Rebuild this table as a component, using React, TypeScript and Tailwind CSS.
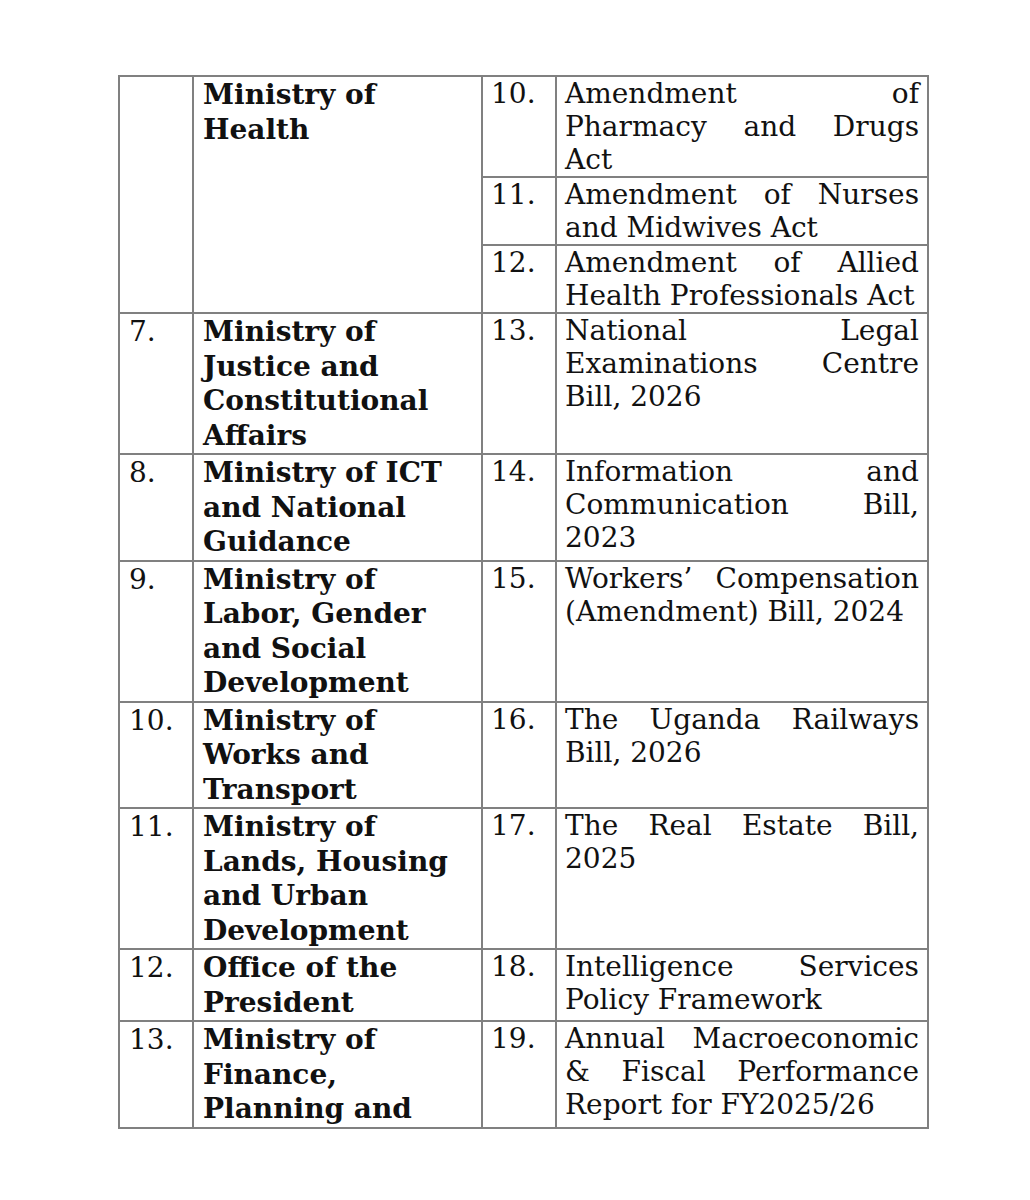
type Row = {
  no: string;
  ministry: string[];
  items: { no: string; lines: string[] }[];
};

const rows: Row[] = [
  {
    no: "",
    ministry: ["Ministry of", "Health"],
    items: [
      { no: "10.", lines: ["Amendment of", "Pharmacy and Drugs", "Act"] },
      { no: "11.", lines: ["Amendment of Nurses", "and Midwives Act"] },
      { no: "12.", lines: ["Amendment of Allied", "Health Professionals Act"] },
    ],
  },
  {
    no: "7.",
    ministry: ["Ministry of", "Justice and", "Constitutional", "Affairs"],
    items: [{ no: "13.", lines: ["National Legal", "Examinations Centre", "Bill, 2026"] }],
  },
  {
    no: "8.",
    ministry: ["Ministry of ICT", "and National", "Guidance"],
    items: [{ no: "14.", lines: ["Information and", "Communication Bill,", "2023"] }],
  },
  {
    no: "9.",
    ministry: ["Ministry of", "Labor, Gender", "and Social", "Development"],
    items: [{ no: "15.", lines: ["Workers’ Compensation", "(Amendment) Bill, 2024"] }],
  },
  {
    no: "10.",
    ministry: ["Ministry of", "Works and", "Transport"],
    items: [{ no: "16.", lines: ["The Uganda Railways", "Bill, 2026"] }],
  },
  {
    no: "11.",
    ministry: ["Ministry of", "Lands, Housing", "and Urban", "Development"],
    items: [{ no: "17.", lines: ["The Real Estate Bill,", "2025"] }],
  },
  {
    no: "12.",
    ministry: ["Office of the", "President"],
    items: [{ no: "18.", lines: ["Intelligence Services", "Policy Framework"] }],
  },
  {
    no: "13.",
    ministry: ["Ministry of", "Finance,", "Planning and"],
    items: [
      {
        no: "19.",
        lines: ["Annual Macroeconomic", "& Fiscal Performance", "Report for FY2025/26"],
      },
    ],
  },
];

const cell = "border-2 border-[#808080] align-top";

// each line is its own block so the breaks match the page; all but the last are justified
function Justified({ lines }: { lines: string[] }) {
  return (
    <>
      {lines.map((l, i) => (
        <div
          key={i}
          className={
            i < lines.length - 1
              ? "whitespace-nowrap text-justify [text-align-last:justify]"
              : "whitespace-nowrap text-left"
          }
        >
          {l}
        </div>
      ))}
    </>
  );
}

export default function App() {
  return (
    <div className="min-h-[1200px] bg-white pl-[118px] pt-[75px] text-[#111] [font-family:'DejaVu_Serif',serif]">
      <table className="w-[809px] table-fixed border-collapse text-[28px]">
        <colgroup>
          <col className="w-[74px]" />
          <col className="w-[289px]" />
          <col className="w-[74px]" />
          <col className="w-[372px]" />
        </colgroup>
        <tbody>
          {rows.map((r, ri) =>
            r.items.map((it, ii) => (
              <tr key={`${ri}-${ii}`}>
                {ii === 0 && (
                  <>
                    <td rowSpan={r.items.length} className={`${cell} pl-[9px] pt-[1px] leading-[34.5px]`}>
                      {r.no}
                    </td>
                    <td
                      rowSpan={r.items.length}
                      className={`${cell} pl-[9px] pt-[1px] font-bold leading-[34.5px]`}
                    >
                      {r.ministry.map((m, mi) => (
                        <div key={mi} className="whitespace-nowrap">
                          {m}
                        </div>
                      ))}
                    </td>
                  </>
                )}
                <td className={`${cell} pl-[8px] leading-[33px]`}>{it.no}</td>
                <td className={`${cell} pl-[8px] pr-[8px] leading-[33px]`}>
                  <Justified lines={it.lines} />
                </td>
              </tr>
            ))
          )}
        </tbody>
      </table>
    </div>
  );
}
